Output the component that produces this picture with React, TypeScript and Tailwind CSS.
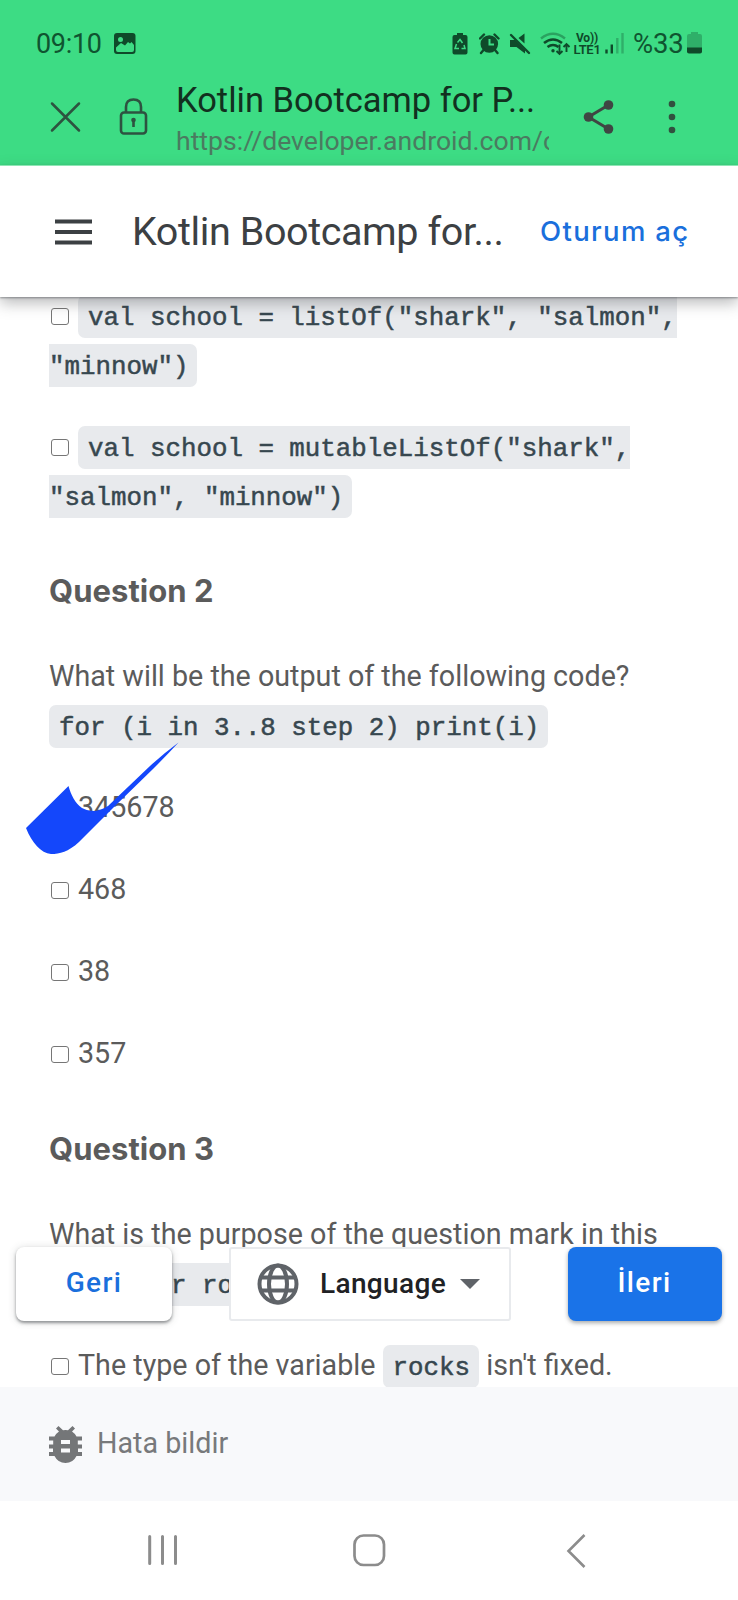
import type { ReactNode } from "react";

const INK = "#0f4a2a";

function StatusBar() {
  return (
    <div className="flex h-[86px] items-start pl-[36px] pt-[27px] text-[#0f5430]">
      <span className="w-[78px] text-[27px] leading-[34px] tracking-[-0.3px]">09:10</span>
      <svg className="mt-[6px]" width="22" height="21" viewBox="0 0 22 21">
        <rect width="21.5" height="21" rx="3" fill={INK} />
        <circle cx="6.5" cy="6.5" r="2.5" fill="#3ddc84" />
        <path d="M2 14.500l5-4.500 4 2.500 3-3.500 2 1.500 1.500-1.500 2.500 3V17q0 2-2 2H4q-2 0-2-2z" fill="#3ddc84" />
      </svg>
      <svg className="ml-[316px] mt-[6px]" width="16" height="22" viewBox="0 0 16 22">
        <path d="M5 0h6v2h2.500q2 0 2 2V19.500q0 2-2 2h-11q-2 0-2-2V4q0-2 2-2H5z" fill={INK} />
        <path d="M5.500 9.500L8 6.500l2.500 3.500M12 12l1 3.500H9.500M7 15.500H3L4.500 11" fill="none" stroke="#3ddc84" strokeWidth="1.500" />
      </svg>
      <svg className="ml-[11px] mt-[6px]" width="21" height="22" viewBox="0 0 21 22">
        <circle cx="10.300" cy="11" r="8.800" fill={INK} />
        <path d="M1 5.500L5 1.500M19.500 5.500l-4-4M4.500 17l-2.500 3M16 17l2.500 3" stroke={INK} strokeWidth="2.400" strokeLinecap="round" />
        <path d="M10.500 6v5.500h4.500" fill="none" stroke="#3ddc84" strokeWidth="2" />
      </svg>
      <svg className="ml-[9px] mt-[6px]" width="22" height="22" viewBox="0 0 22 22">
        <path d="M1 7h5L16 17v3.500L7.500 14H1zM9.500 5L15.500 .5V10.500z" fill={INK} />
        <path d="M2 2l18 18" stroke={INK} strokeWidth="2.400" strokeLinecap="round" />
      </svg>
      <svg className="ml-[9px] mt-[4px]" width="31" height="25" viewBox="0 0 31 25" fill="none">
        <path d="M1 7.500Q13 -2 25 7.500" stroke={INK} strokeOpacity=".4" strokeWidth="2.400" />
        <path d="M4 12q9-7 18 0M7.500 16q5.500-4 11 0" stroke={INK} strokeWidth="2.600" />
        <circle cx="13" cy="19.800" r="1.700" fill={INK} />
        <path d="M19.500 13.500v9M16.500 20l3 3 3-3M26.500 21v-8M23.500 16l3-3 3 3" stroke={INK} strokeWidth="1.900" />
      </svg>
      <div className="ml-[2px] mt-[6px] w-[28px] text-center text-[12px] font-bold leading-[11px] tracking-[-0.2px] text-[#0f4a2a]">
        <div>Vo))</div>
        <div className="text-[13px] font-semibold leading-[12px] tracking-[-0.3px]">LTE1</div>
      </div>
      <svg className="ml-[4px] mt-[6px]" width="20" height="21" viewBox="0 0 20 21" stroke={INK} strokeWidth="2.400">
        <path d="M1.500 16.500V20.500M6.800 11.500v9" />
        <path d="M12.300 5v15.500M17.500 0v20.500" strokeOpacity=".3" />
      </svg>
      <span className="ml-[8px] w-[54px] text-[27.500px] leading-[34px] tracking-[-0.2px]">%33</span>
      <svg className="mt-[5px]" width="16" height="22" viewBox="0 0 16 22">
        <path d="M4 0h7v2h2q2 0 2 2v15q0 2-2 2H2q-2 0-2-2V4q0-2 2-2h2z" fill={INK} fillOpacity=".3" />
        <path d="M0 15.500h15v4q0 2-2 2H2q-2 0-2-2z" fill={INK} />
      </svg>
    </div>
  );
}

function BrowserBar() {
  return (
    <div className="flex h-[79px] items-start">
      <svg className="ml-[50px] mt-[15px]" width="31" height="32" viewBox="0 0 31 32">
        <path d="M2 2.500l27 27M29 2.500l-27 27" stroke="#2d5340" strokeWidth="2.500" strokeLinecap="round" />
      </svg>
      <svg className="ml-[38px] mt-[12px]" width="29" height="38" viewBox="0 0 28 38" fill="none" stroke="#2d5340" strokeWidth="2.600">
        <rect x="1.500" y="14.500" width="25" height="21" rx="3" />
        <path d="M6.500 14V9q0-7.500 7.500-7.500t7.500 7.500v5" />
        <circle cx="14" cy="22" r="2.300" fill="#2d5340" stroke="none" />
        <path d="M14 22v7" />
      </svg>
      <div className="ml-[28px] w-[373px] overflow-hidden whitespace-nowrap">
        <div className="h-[36px] text-[34.500px] leading-[28px] text-[#12301f]">Kotlin Bootcamp for P...</div>
        <div className="h-[36px] text-[26.600px] leading-[38px] text-[#4b7a60]">https://developer.android.com/codelabs</div>
      </div>
      <svg className="ml-[34px] mt-[13px]" width="32" height="36" viewBox="0 0 32 36">
        <path d="M25.500 6L5.500 18l20 12" fill="none" stroke="#3f4643" strokeWidth="3" />
        <g fill="#3f4643">
          <circle cx="25.500" cy="6" r="4.800" />
          <circle cx="5.500" cy="18" r="4.800" />
          <circle cx="25.500" cy="30" r="4.800" />
        </g>
      </svg>
      <svg className="ml-[53px] mt-[13px]" width="8" height="36" viewBox="0 0 8 36" fill="#31513f">
        <circle cx="4" cy="5" r="3.300" />
        <circle cx="4" cy="18" r="3.300" />
        <circle cx="4" cy="31" r="3.300" />
      </svg>
    </div>
  );
}

function SiteHeader() {
  return (
    <header className="relative z-10 flex h-[132px] shrink-0 items-center border-t border-[#8ee6b4] bg-white pl-[55px] shadow-[0_1px_2px_rgba(60,64,67,0.5),0_6px_14px_rgba(60,64,67,0.36)]">
      <svg width="37" height="26" viewBox="0 0 37 26" stroke="#3c4043" strokeWidth="4">
        <path d="M0 2.500h37M0 13h37M0 23.500h37" />
      </svg>
      <h1 className="ml-[40px] w-[408px] text-[39.500px] leading-[48px] tracking-[-0.4px] text-[#3c4043]">Kotlin Bootcamp for...</h1>
      <a className="pb-[1px] font-[Inter,sans-serif] text-[27.500px] font-medium leading-[36px] tracking-[1.350px] text-[#1a6fdc]">Oturum aç</a>
    </header>
  );
}

function Code({ children }: { children: ReactNode }) {
  return (
    <code className="rounded-[7px] bg-[#e8eaed] pb-[5px] pl-[10px] pr-[9px] pt-[9px] font-['Liberation_Mono',monospace] text-[25.820px] leading-none text-[#37474f] [-webkit-text-stroke:0.5px_#37474f]">
      {children}
    </code>
  );
}

function Box({ hidden = false }: { hidden?: boolean }) {
  const base = "ml-[2px] mr-[9px] inline-block h-[17px] w-[18px] rounded-[3px] border-[1.500px] border-[#767676] bg-white";
  return <span className={hidden ? `${base} invisible` : base} />;
}

function Heading({ children }: { children: ReactNode }) {
  return <h2 className="mt-[46px] font-[Inter,sans-serif] text-[31px] font-bold leading-[49px] tracking-[0.05px]">{children}</h2>;
}

function Swipe() {
  return (
    <svg className="absolute left-[20px] top-[35px]" width="164" height="124" viewBox="20 736 164 124">
      <path
        d="M68.500 786C71 795 75 803 82 808Q94 815 108 806L150 766Q163 754 178.500 742.500Q168 754 154 768L115 806L79 842C68 852 60 854 51 854C41 853 32 843 26 828Z"
        fill="#1447fb"
      />
    </svg>
  );
}

function FloatingBar() {
  return (
    <div className="absolute left-[16px] top-[950px] z-10 flex h-[74px] w-[706px] items-stretch text-[28px] font-medium">
      <button className="w-[156px] rounded-[8px] bg-white pb-[3px] tracking-[1.400px] text-[#1a6fdc] shadow-[0_2px_3px_rgba(60,64,67,0.5),0_1px_8px_rgba(60,64,67,0.2)]">Geri</button>
      <button className="ml-[57px] flex w-[282px] items-center rounded-[3px] border-2 border-[#e8eaed] bg-white pl-[26px] text-[#202124]">
        <svg width="42" height="42" viewBox="0 0 42 42" fill="none" stroke="#5f6368" strokeWidth="4">
          <circle cx="21" cy="21" r="18.500" />
          <ellipse cx="21" cy="21" rx="9" ry="18.500" />
          <path d="M4 14.500h34M4 27.500h34" />
        </svg>
        <span className="ml-[21px] w-[140px] pb-[1px] text-left tracking-[0.350px]">Language</span>
        <svg width="20" height="10" viewBox="0 0 20 10"><path d="M0 0h20L10 10z" fill="#5f6368" /></svg>
      </button>
      <button className="ml-[57px] w-[154px] rounded-[8px] bg-[#1a73e8] pb-[3px] pr-[1px] tracking-[1.400px] text-white shadow-[0_2px_4px_rgba(60,64,67,0.45)]">İleri</button>
    </div>
  );
}

export default function App() {
  return (
    <div className="flex h-[1600px] w-[738px] flex-col overflow-hidden bg-white font-[Roboto,sans-serif]">
      <div className="shrink-0 bg-[#3ddc84]">
        <StatusBar />
        <BrowserBar />
      </div>
      <SiteHeader />
      <main className="relative h-[1090px] shrink-0 overflow-hidden">
        <div className="-mt-[6px] whitespace-nowrap pl-[49px] text-[28.700px] leading-[49px] text-[#5b5b5b]">
          <p><Box /><Code>val school = listOf("shark", "salmon",<br />"minnow")</Code></p>
          <p className="mt-[33px]"><Box /><Code>val school = mutableListOf("shark",<br />"salmon", "minnow")</Code></p>
          <Heading>Question 2</Heading>
          <p className="mt-[37px]">What will be the output of the following code?</p>
          <div className="relative -ml-[49px] pl-[49px]">
            <p><Code>for (i in 3..8 step 2) print(i)</Code></p>
            <p className="mt-[33px]"><Box hidden />345678</p>
            <Swipe />
          </div>
          <p className="mt-[33px]"><Box />468</p>
          <p className="mt-[33px]"><Box />38</p>
          <p className="mt-[33px]"><Box />357</p>
          <Heading>Question 3</Heading>
          <p className="mt-[37px]">What is the purpose of the question mark in this<br /><span className="tracking-[-0.4px]">code? </span><Code>var rocks: Int? = 3</Code></p>
          <p className="mt-[33px]"><Box />The type of the variable <Code>rocks</Code> isn't fixed.</p>
        </div>
        <FloatingBar />
      </main>
      <footer className="flex h-[114px] shrink-0 items-center bg-[#f8f9fb] pl-[49px] text-[28.700px] text-[#77797b]">
        <svg width="33" height="37" viewBox="0 0 33 37" fill="#747678">
          <path d="M7 2.500L9.500 0l4.500 4.300q2.500-.5 5 0L23.500 0 26 2.500l-3 3q3 2 4.500 5H33v4h-4.200v4H33v4h-4V26h4v4h-5.500Q24 37 16.500 37T5.500 30H0v-4h4v-3.500H0v-4h4.200v-4H0v-4h5.500q1.500-3 4.500-5zM12 14v4h9v-4zm0 8.500v4h9v-4z" fillRule="evenodd" />
        </svg>
        <span className="ml-[15px]">Hata bildir</span>
      </footer>
      <nav className="flex h-[99px] shrink-0 items-start bg-white pl-[147px] pt-[32px]">
        <svg width="32" height="34" viewBox="0 0 32 34" stroke="#8c8c8c" strokeWidth="3" strokeLinecap="round">
          <path d="M2.700 3.500v27M15.500 3.500v27M28.500 3.500v27" />
        </svg>
        <svg className="ml-[173px]" width="34" height="34" viewBox="0 0 34 34" fill="none" stroke="#8c8c8c" strokeWidth="2.700">
          <rect x="2.500" y="2.500" width="29.500" height="29.500" rx="9" />
        </svg>
        <svg className="ml-[180px]" width="20" height="36" viewBox="0 0 20 36" fill="none" stroke="#8c8c8c" strokeWidth="2.600">
          <path d="M18.500 2L2.500 18l16 16" />
        </svg>
      </nav>
    </div>
  );
}
